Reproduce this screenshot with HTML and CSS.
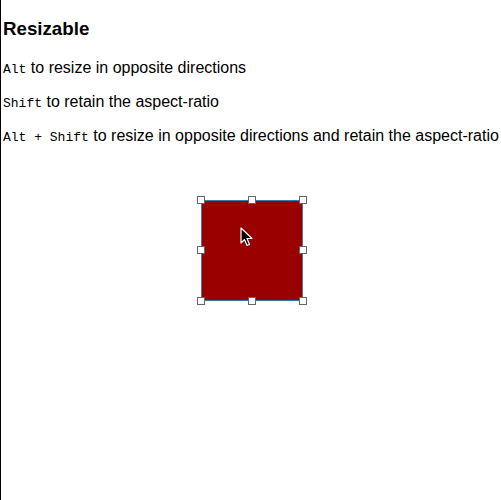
FILE: index.html
```html
<!DOCTYPE html>
<html>
<head>
<meta charset="utf-8">
<link rel="stylesheet" href="styles.css">
</head>
<body>
<div class="page">
  <h3 class="title">Resizable</h3>
  <p class="line"><code class="key">Alt</code> to resize in opposite directions</p>
  <p class="line"><code class="key">Shift</code> to retain the aspect-ratio</p>
  <p class="line"><code class="key">Alt + Shift</code> to resize in opposite directions and retain the aspect-ratio</p>
  <div class="box">
    <span class="handle h-tl"></span>
    <span class="handle h-tc"></span>
    <span class="handle h-tr"></span>
    <span class="handle h-ml"></span>
    <span class="handle h-mr"></span>
    <span class="handle h-bl"></span>
    <span class="handle h-bc"></span>
    <span class="handle h-br"></span>
    <svg class="cursor" width="13" height="20" viewBox="0 0 13 20">
      <path d="M1 1 L1 16 L4.5 12.5 L7 18.5 L9.5 17.5 L7 11.5 L12 11.5 Z" fill="#000" stroke="#fff" stroke-width="1.2" stroke-linejoin="round"/>
    </svg>
  </div>
</div>
</body>
</html>
```

FILE: styles.css
```css
html, body {
  margin: 0;
  padding: 0;
  background: #fff;
}

.page {
  box-sizing: border-box;
  height: 500px;
  border-left: 1px solid #000;
  padding-left: 2px;
  font-family: "Liberation Sans", Arial, sans-serif;
  font-size: 16px;
  color: #000;
  overflow: hidden;
}

.title {
  font-size: 18.72px;
  font-weight: bold;
  margin: 18px 0 18.72px;
}

.line {
  margin: 16px 0;
  white-space: nowrap;
}

.key {
  font-family: "Liberation Mono", "Courier New", monospace;
  font-size: 13px;
}

.box {
  position: relative;
  width: 100px;
  height: 99px;
  margin-top: 55px;
  margin-left: 198px;
  background: #990000;
  border: 1px solid #3b79a8;
}

.handle {
  position: absolute;
  width: 6px;
  height: 6px;
  background: #fff;
  border: 1px solid #666;
}

.h-tl { left: -5px; top: -5px; }
.h-tc { left: 46px; top: -5px; }
.h-tr { right: -5px; top: -5px; }
.h-ml { left: -5px; top: 45px; }
.h-mr { right: -5px; top: 45px; }
.h-bl { left: -5px; bottom: -5px; }
.h-bc { left: 46px; bottom: -5px; }
.h-br { right: -5px; bottom: -5px; }

.cursor {
  position: absolute;
  left: 38px;
  top: 26px;
}
```
